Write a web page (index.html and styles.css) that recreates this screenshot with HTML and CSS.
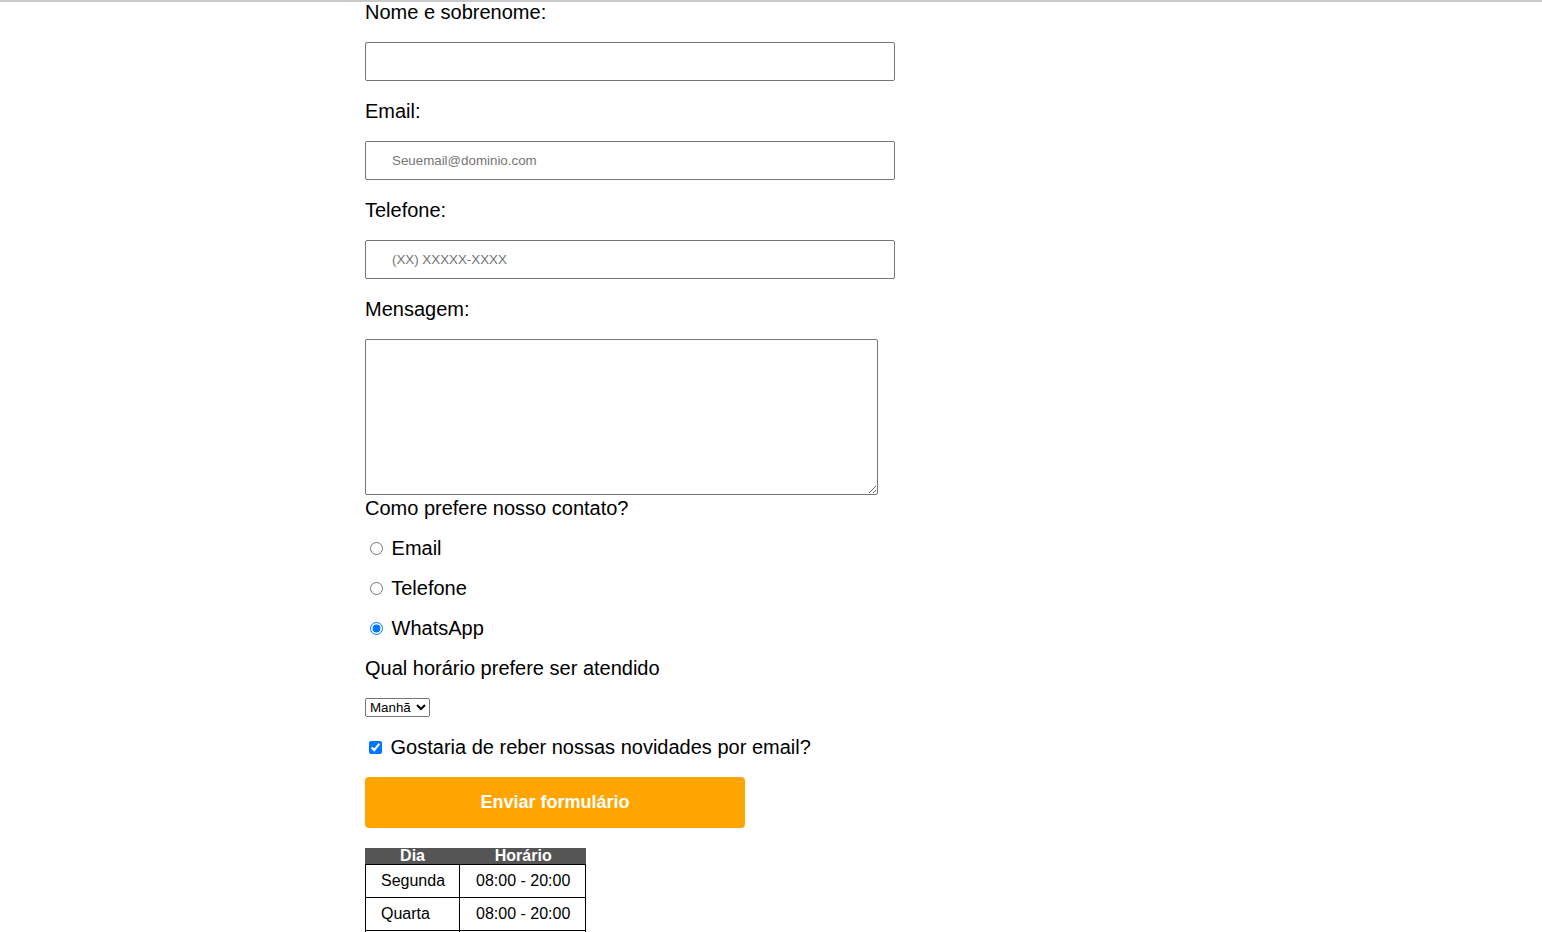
FILE: index.html
```html
<!DOCTYPE html>
<html lang="pt-BR">
<head>
<meta charset="utf-8">
<title>Contato</title>
<link rel="stylesheet" href="styles.css">
</head>
<body>
<div class="topline"></div>
<main class="page">
  <form class="form">
    <label class="lbl" for="nome">Nome e sobrenome:</label>
    <input class="field" id="nome" type="text">

    <label class="lbl" for="email">Email:</label>
    <input class="field" id="email" type="email" placeholder="Seuemail@dominio.com">

    <label class="lbl" for="tel">Telefone:</label>
    <input class="field" id="tel" type="tel" placeholder="(XX) XXXXX-XXXX">

    <label class="lbl" for="msg">Mensagem:</label>
    <textarea class="area" id="msg"></textarea>

    <p class="question">Como prefere nosso contato?</p>
    <label class="opt"><input type="radio" name="contato"> Email</label>
    <label class="opt"><input type="radio" name="contato"> Telefone</label>
    <label class="opt"><input type="radio" name="contato" checked> WhatsApp</label>

    <label class="question2" for="hora">Qual horário prefere ser atendido</label>
    <div class="selrow">
      <select id="hora" class="sel">
        <option>Manhã</option>
        <option>Tarde</option>
        <option>Noite</option>
      </select>
    </div>

    <label class="check"><input type="checkbox" checked> Gostaria de reber nossas novidades por email?</label>

    <button class="submit" type="button">Enviar formulário</button>
  </form>

  <table class="hours">
    <thead>
      <tr><th>Dia</th><th>Horário</th></tr>
    </thead>
    <tbody>
      <tr><td>Segunda</td><td>08:00 - 20:00</td></tr>
      <tr><td>Quarta</td><td>08:00 - 20:00</td></tr>
      <tr><td>Sexta</td><td>08:00 - 20:00</td></tr>
    </tbody>
  </table>
</main>
</body>
</html>
```
FILE: styles.css
```css
html, body {
  margin: 0;
  padding: 0;
  background: #fff;
}

body {
  font-family: "Liberation Sans", Arial, sans-serif;
  color: #000;
}

.topline {
  position: fixed;
  top: 0;
  left: 0;
  right: 0;
  height: 2px;
  background: #c9c9c9;
}

.page {
  padding-left: 365px;
  padding-bottom: 40px;
}

.form {
  display: flex;
  flex-direction: column;
  align-items: flex-start;
}

.lbl {
  font-size: 20px;
  line-height: 23px;
  padding-top: 1px;
  margin-bottom: 18px;
}

.field {
  box-sizing: border-box;
  width: 530px;
  height: 39px;
  margin: 0 0 18px 0;
  padding: 0 26px;
  border: 1px solid #767676;
  border-radius: 2px;
  font-family: "Liberation Sans", Arial, sans-serif;
  font-size: 13.333px;
  color: #000;
  background: #fff;
}

.field::placeholder {
  color: #757575;
}

.area {
  box-sizing: border-box;
  width: 513px;
  height: 156px;
  margin: 0 0 2px 0;
  padding: 2px;
  border: 1px solid #767676;
  border-radius: 2px;
  font-family: "Liberation Mono", monospace;
  font-size: 13.333px;
}

.question {
  margin: 0;
  font-size: 20px;
  line-height: 23px;
}

.opt {
  margin-top: 17px;
  font-size: 20px;
  line-height: 23px;
}

.opt input {
  margin: 3px 3px 0 5px;
}

.question2 {
  margin-top: 17px;
  font-size: 20px;
  line-height: 23px;
}

.selrow {
  margin-top: 18px;
  height: 19px;
  display: flex;
}

.sel {
  font-family: "Liberation Sans", Arial, sans-serif;
  font-size: 13.333px;
  height: 19px;
  width: 65px;
  padding: 0;
  color: #000;
}

.check {
  margin-top: 19px;
  font-size: 20px;
  line-height: 23px;
}

.check input {
  margin: 3px 3px 3px 4px;
}

.submit {
  margin-top: 18px;
  width: 380px;
  height: 51px;
  border: none;
  border-radius: 4px;
  background: #ffa500;
  color: #fff;
  font-family: "Liberation Sans", Arial, sans-serif;
  font-weight: bold;
  font-size: 18px;
  cursor: pointer;
}

.hours {
  margin-top: 20px;
  border-collapse: separate;
  border-spacing: 0;
  font-size: 16px;
}

.hours th {
  background: #555;
  color: #fff;
  font-weight: bold;
  padding: 0;
  line-height: 16px;
  text-align: center;
}

.hours td {
  border-right: 1px solid #000;
  border-bottom: 1px solid #000;
  padding: 7px 15px 7px 16px;
  line-height: 18px;
  text-align: left;
}

.hours tbody tr:first-child td {
  border-top: 1px solid #000;
}

.hours td:first-child {
  border-left: 1px solid #000;
  padding-left: 15px;
  padding-right: 14px;
}
```
